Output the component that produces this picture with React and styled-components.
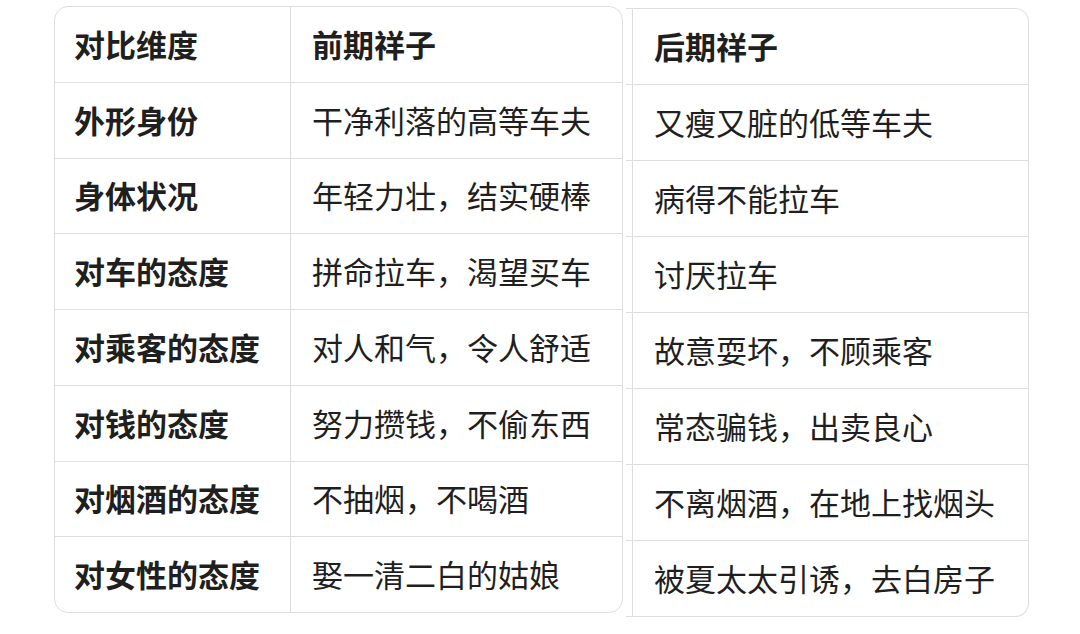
import styled, { createGlobalStyle, css } from 'styled-components';

const early = [
  ['外形身份', '干净利落的高等车夫'],
  ['身体状况', '年轻力壮，结实硬棒'],
  ['对车的态度', '拼命拉车，渴望买车'],
  ['对乘客的态度', '对人和气，令人舒适'],
  ['对钱的态度', '努力攒钱，不偷东西'],
  ['对烟酒的态度', '不抽烟，不喝酒'],
  ['对女性的态度', '娶一清二白的姑娘'],
];

const late = [
  '又瘦又脏的低等车夫',
  '病得不能拉车',
  '讨厌拉车',
  '故意耍坏，不顾乘客',
  '常态骗钱，出卖良心',
  '不离烟酒，在地上找烟头',
  '被夏太太引诱，去白房子',
];

const GlobalStyle = createGlobalStyle`
  body {
    margin: 0;
    background: #ffffff;
    font-family: "Noto Sans CJK SC", "Noto Sans", sans-serif;
    color: #1f1f1f;
  }
`;

export default function App() {
  return (
    <>
      <GlobalStyle />
      <Page>
        <LeftTable>
          <Row>
            <Cell $bold $divider>对比维度</Cell>
            <Cell $bold>前期祥子</Cell>
          </Row>
          {early.map(([dim, text]) => (
            <Row key={dim}>
              <Cell $bold $divider>{dim}</Cell>
              <Cell>{text}</Cell>
            </Row>
          ))}
        </LeftTable>
        <RightTable>
          <RightRow>
            <Stub />
            <Cell $bold>后期祥子</Cell>
          </RightRow>
          {late.map((text) => (
            <RightRow key={text}>
              <Stub />
              <Cell>{text}</Cell>
            </RightRow>
          ))}
        </RightTable>
      </Page>
    </>
  );
}

const line = '#dedede';

const Page = styled.div`
  display: flex;
  align-items: flex-start;
  gap: 3px;
  padding: 6px 0 0 54px;
  width: 1080px;
  height: 634px;
  box-sizing: border-box;
`;

const LeftTable = styled.div`
  display: flex;
  flex-direction: column;
  width: 569px;
  height: 607px;
  box-sizing: border-box;
  border: 1.5px solid ${line};
  border-radius: 14px;
  overflow: hidden;
`;

const RightTable = styled.div`
  display: flex;
  flex-direction: column;
  margin-top: 2px;
  width: 403px;
  height: 609px;
  box-sizing: border-box;
  border: 1.5px solid ${line};
  border-left: none;
  border-radius: 0 14px 14px 0;
  overflow: hidden;
`;

const Row = styled.div`
  flex: 1;
  display: grid;
  grid-template-columns: 236px 1fr;
  border-bottom: 1.5px solid ${line};

  &:last-child {
    border-bottom: none;
  }
`;

const RightRow = styled(Row)`
  grid-template-columns: 7px 1fr;
`;

const Stub = styled.div`
  border-right: 1.5px solid ${line};
`;

const Cell = styled.div`
  display: flex;
  align-items: center;
  padding: 0 0 2px 21px;
  font-size: 31px;
  font-weight: 400;
  white-space: nowrap;

  ${({ $bold }) =>
    $bold &&
    css`
      font-weight: 700;
    `}

  ${({ $divider }) =>
    $divider &&
    css`
      padding-left: 19px;
      border-right: 1.5px solid ${line};
    `}
`;
